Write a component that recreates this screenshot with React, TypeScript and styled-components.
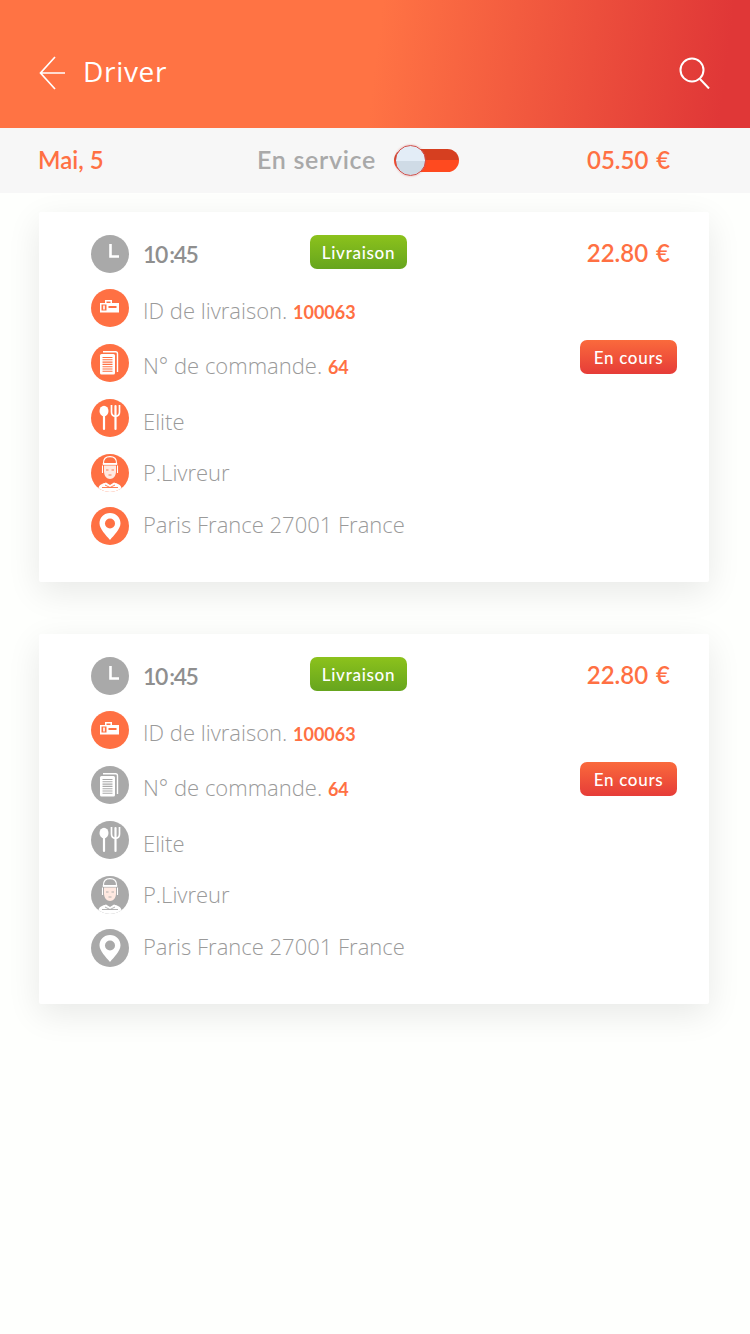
import React, { FC } from 'react';
import styled, { createGlobalStyle } from 'styled-components';

const ORANGE = '#ff7043';
const GRAY = '#a9a9a9';

const GlobalStyle = createGlobalStyle`
  html, body {
    margin: 0;
    padding: 0;
    background: #fefffd;
  }
  * {
    box-sizing: border-box;
  }
`;

const Page = styled.div`
  width: 750px;
  height: 1334px;
  overflow: hidden;
  background: #fefffd;
  font-family: 'Lato', 'Open Sans', sans-serif;
`;

const Header = styled.header`
  height: 128px;
  padding: 16px 40px 0 39px;
  display: flex;
  align-items: center;
  background: linear-gradient(97deg, #ff7344 0%, #ff7344 50%, #e03737 96%);
  color: #fff;
`;

const BackButton = styled.div`
  display: flex;
  width: 26px;
  height: 34px;
  margin-right: 18px;
  margin-top: 1px;
`;

const Title = styled.h1`
  flex: 1;
  margin: 0;
  font-family: 'Open Sans', sans-serif;
  font-size: 28px;
  font-weight: 400;
  letter-spacing: 0.7px;
  line-height: 34px;
  padding-bottom: 2px;
`;

const SearchButton = styled.div`
  display: flex;
  width: 31px;
  height: 32px;
  margin-top: 1px;
`;

const SubBar = styled.div`
  height: 65px;
  padding-left: 38px;
  display: flex;
  align-items: center;
  background: #f7f7f7;
`;

const DateText = styled.div`
  width: 219px;
  padding-bottom: 2px;
  color: ${ORANGE};
  font-size: 24px;
  font-weight: 600;
`;

const ServiceLabel = styled.div`
  width: 137px;
  padding-bottom: 3px;
  color: ${GRAY};
  font-size: 25px;
  font-weight: 600;
  letter-spacing: 0.7px;
`;

const Toggle = styled.div`
  position: relative;
  width: 65px;
  height: 23px;
  margin-right: 128px;
  border-radius: 12px;
  background: linear-gradient(#d63f20 0%, #d63f20 50%, #ff4a1f 50%, #ff4a1f 100%);
`;

const ToggleKnob = styled.div`
  position: absolute;
  left: 1px;
  top: -4px;
  width: 31px;
  height: 31px;
  border-radius: 50%;
  border: 1px solid #d0504c;
  box-shadow: 0 0 2px rgba(208, 80, 76, 0.5);
  background: linear-gradient(#e3edf7 0%, #e3edf7 50%, #cfdbe6 50%, #cfdbe6 100%);
`;

const Balance = styled.div`
  padding-bottom: 2px;
  color: ${ORANGE};
  font-size: 24px;
  font-weight: 600;
  word-spacing: 2px;
`;

const CardList = styled.main`
  padding: 19px 41px 0 39px;
  display: flex;
  flex-direction: column;
  gap: 52px;
`;

const Card = styled.section`
  height: 370px;
  padding: 23px 32px 0 52px;
  background: #fff;
  border-radius: 2px;
  box-shadow: 0 10px 34px rgba(0, 0, 0, 0.09);
`;

const Row = styled.div<{ $gap: number }>`
  height: 38px;
  margin-bottom: ${(p) => p.$gap}px;
  display: flex;
  align-items: center;
`;

const IconCircle = styled.div<{ $active: boolean }>`
  flex: none;
  width: 38px;
  height: 38px;
  margin-right: 14px;
  border-radius: 50%;
  overflow: hidden;
  background: ${(p) => (p.$active ? ORANGE : GRAY)};

  svg {
    display: block;
  }
`;

const Time = styled.div`
  width: 167px;
  padding-bottom: 1px;
  color: #8f8f8f;
  font-size: 23px;
  font-weight: 600;
  letter-spacing: -1.4px;
  word-spacing: -2px;
`;

const Badge = styled.div<{ $kind: 'green' | 'red' }>`
  width: 97px;
  height: 34px;
  display: flex;
  align-items: center;
  justify-content: center;
  border-radius: 7px;
  color: #fff;
  font-size: 17px;
  font-weight: 500;
  letter-spacing: 0.7px;
  background: ${(p) =>
    p.$kind === 'green'
      ? 'linear-gradient(#8cc21c, #66a51e)'
      : 'linear-gradient(#fa6a3c, #e63c38)'};
`;

const TypeBadge = styled(Badge)`
  margin-top: -4px;
`;

const StatusBadge = styled(Badge)`
  margin-top: -12px;
`;

const Amount = styled.div`
  margin-left: auto;
  padding-right: 7px;
  padding-bottom: 3px;
  color: ${ORANGE};
  font-size: 24px;
  font-weight: 600;
  word-spacing: 2px;
`;

const Label = styled.div<{ $top: number; $bottom: number }>`
  flex: 1;
  padding-top: ${(p) => p.$top}px;
  padding-bottom: ${(p) => p.$bottom}px;
  color: #9a9a9a;
  font-family: 'Open Sans', sans-serif;
  font-size: 22px;
  font-weight: 300;
`;

const Value = styled.span`
  color: ${ORANGE};
  font-family: 'Lato', sans-serif;
  font-size: 18px;
  font-weight: 700;
`;

const ArrowIcon: FC = () => (
  <svg width="26" height="34" viewBox="0 0 26 34" fill="none" stroke="#fff" strokeWidth="1.700">
    <path d="M16 1 1.500 17 16 33M1.500 17H26" />
  </svg>
);

const SearchIcon: FC = () => (
  <svg width="31" height="32" viewBox="0 0 31 32" fill="none" stroke="#fff" strokeWidth="2">
    <circle cx="13" cy="13" r="11.500" />
    <path d="m21 22 9 9.500" />
  </svg>
);

const ClockGlyph: FC = () => (
  <svg width="38" height="38" viewBox="0 0 38 38" fill="none" stroke="#fff" strokeWidth="2.600">
    <path d="M19.500 9v12.500H28" />
  </svg>
);

const IdGlyph: FC<{ color: string }> = ({ color }) => (
  <svg width="38" height="38" viewBox="0 0 38 38">
    <path fill="#fff" d="M14 11h7v3h7v9.500H9V14h5zM15.500 12.500V14h4v-1.500z" />
    <rect x="10.500" y="15.500" width="5" height="6" fill={color} />
    <rect x="12" y="16.500" width="2" height="4" fill="#ffe3da" />
    <rect x="17.500" y="17" width="8" height="2" fill={color} />
  </svg>
);

const DocGlyph: FC<{ color: string }> = ({ color }) => (
  <svg width="38" height="38" viewBox="0 0 38 38">
    <path fill="none" stroke="#fff" strokeWidth="1.400" d="M12 7.700h12.500a2 2 0 0 1 2 2V28" />
    <rect x="9" y="10" width="15" height="20.500" rx="1.500" fill="#fff" />
    <path
      stroke={color}
      strokeWidth="1.100"
      d="M11.500 13.500h10M11.500 15.800h10M11.500 18.100h10M11.500 20.400h10M11.500 22.700h10M11.500 25h10M11.500 27.300h10"
    />
  </svg>
);

const CutleryGlyph: FC = () => (
  <svg width="38" height="38" viewBox="0 0 38 38" fill="none" stroke="#fff">
    <ellipse cx="13" cy="12" rx="4.500" ry="5.300" fill="#fff" stroke="none" />
    <path strokeWidth="2.200" strokeLinecap="round" d="M13 15v15" />
    <path strokeWidth="1.700" d="M20.500 6v7c0 3 2 4.200 4 4.200s4-1.200 4-4.200V6" />
    <path strokeWidth="2.200" strokeLinecap="round" d="M24.500 7v23" />
  </svg>
);

const CourierGlyph: FC<{ color: string }> = ({ color }) => (
  <svg width="38" height="38" viewBox="0 0 38 38">
    <path fill="none" stroke="#fff" strokeWidth="1.200" d="M12.500 10C12 4.500 15 2.700 19 2.700S26 4.500 25.500 10z" />
    <path fill="#fff" d="M11.800 9h14.400v1.800H11.800z" />
    <path fill="#ffe9e1" d="M13 11.500h12v6c0 4.500-2.700 7.500-6 7.500s-6-3-6-7.500z" />
    <path fill="none" stroke={color} strokeWidth="0.900" d="M15 16h2.500M20.500 16H23M17.500 21h3" />
    <path fill="none" stroke="#fff" strokeWidth="1.100" d="M11.500 11.500v7.500M26.500 11.500v7.500" />
    <path fill="#fff" d="M7.500 34.500c0-3.500 4-5 7.500-6l4 2.500 4-2.500c3.500 1 7.500 2.500 7.500 6v3.500h-23z" />
    <path fill="none" stroke={color} strokeWidth="0.900" d="M11 33.500h16M14 31l5 2.500 5-2.500" />
  </svg>
);

const PinGlyph: FC<{ color: string }> = ({ color }) => (
  <svg width="38" height="38" viewBox="0 0 38 38">
    <path
      fill="#fff"
      d="M19 6c-6 0-10.500 4.500-10.500 10.300 0 5.700 6.500 12 10.500 16.700 4-4.700 10.500-11 10.500-16.700C29.500 10.500 25 6 19 6z"
    />
    <circle cx="19" cy="16.500" r="5" fill={color} />
  </svg>
);

type CardProps = {
  activeAll: boolean;
};

const DeliveryCard: FC<CardProps> = ({ activeAll }) => {
  const rest = activeAll ? ORANGE : GRAY;

  return (
    <Card>
      <Row $gap={16}>
        <IconCircle $active={false}>
          <ClockGlyph />
        </IconCircle>
        <Time>10 :45</Time>
        <TypeBadge $kind="green">Livraison</TypeBadge>
        <Amount>22.80 €</Amount>
      </Row>
      <Row $gap={17}>
        <IconCircle $active>
          <IdGlyph color={ORANGE} />
        </IconCircle>
        <Label $top={4} $bottom={0}>
          ID de livraison. <Value>100063</Value>
        </Label>
      </Row>
      <Row $gap={17}>
        <IconCircle $active={activeAll}>
          <DocGlyph color={rest} />
        </IconCircle>
        <Label $top={4} $bottom={0}>
          N° de commande. <Value>64</Value>
        </Label>
        <StatusBadge $kind="red">En cours</StatusBadge>
      </Row>
      <Row $gap={17}>
        <IconCircle $active={activeAll}>
          <CutleryGlyph />
        </IconCircle>
        <Label $top={5} $bottom={0}>
          Elite
        </Label>
      </Row>
      <Row $gap={15}>
        <IconCircle $active={activeAll}>
          <CourierGlyph color={rest} />
        </IconCircle>
        <Label $top={0} $bottom={3}>
          P.Livreur
        </Label>
      </Row>
      <Row $gap={0}>
        <IconCircle $active={activeAll}>
          <PinGlyph color={rest} />
        </IconCircle>
        <Label $top={0} $bottom={5}>
          Paris France 27001 France
        </Label>
      </Row>
    </Card>
  );
};

const App: FC = () => (
  <Page>
    <GlobalStyle />
    <Header>
      <BackButton>
        <ArrowIcon />
      </BackButton>
      <Title>Driver</Title>
      <SearchButton>
        <SearchIcon />
      </SearchButton>
    </Header>
    <SubBar>
      <DateText>Mai, 5</DateText>
      <ServiceLabel>En service</ServiceLabel>
      <Toggle>
        <ToggleKnob />
      </Toggle>
      <Balance>05.50 €</Balance>
    </SubBar>
    <CardList>
      <DeliveryCard activeAll />
      <DeliveryCard activeAll={false} />
    </CardList>
  </Page>
);

export default App;
